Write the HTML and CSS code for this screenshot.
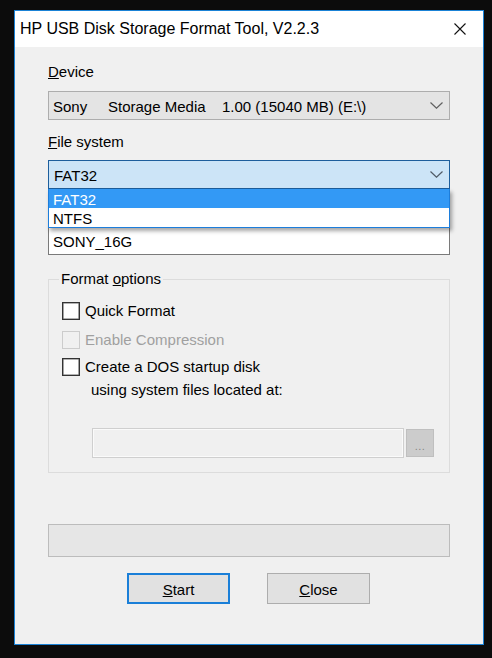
FILE: index.html
```html
<!DOCTYPE html>
<html>
<head>
<meta charset="utf-8">
<link rel="stylesheet" href="styles.css">
</head>
<body>
<div class="window">
  <div class="titlebar">
    <span class="title">HP USB Disk Storage Format Tool, V2.2.3</span>
    <svg class="close-x" width="12" height="12" viewBox="0 0 12 12"><path d="M0.5 0.5 L11.5 11.5 M11.5 0.5 L0.5 11.5" stroke="#111" stroke-width="1.1" fill="none"/></svg>
  </div>
  <div class="client">
    <div class="label lbl-device"><u>D</u>evice</div>
    <div class="combo combo-device">
      <span class="seg seg1">Sony</span><span class="seg seg2">Storage Media</span><span class="seg seg3">1.00 (15040 MB) (E:\)</span>
      <svg class="chev" width="13" height="7" viewBox="0 0 13 7"><path d="M0.5 0.5 L6.5 6.2 L12.5 0.5" stroke="#606060" stroke-width="1.2" fill="none"/></svg>
    </div>
    <div class="label lbl-fs"><u>F</u>ile system</div>
    <div class="fs-wrap">
      <div class="combo combo-fs">
        <span class="seg">FAT32</span>
        <svg class="chev" width="13" height="7" viewBox="0 0 13 7"><path d="M0.5 0.5 L6.5 6.2 L12.5 0.5" stroke="#505a66" stroke-width="1.2" fill="none"/></svg>
      </div>
      <div class="dropdown">
        <div class="item item-sel">FAT32</div>
        <div class="item">NTFS</div>
      </div>
    </div>
    <div class="label-spacer"></div>
    <div class="textbox">SONY_16G</div>
    <fieldset class="group">
      <legend>Format <u>o</u>ptions</legend>
      <div class="check-row row1"><span class="box"></span><span>Quick Format</span></div>
      <div class="check-row row2 disabled"><span class="box"></span><span>Enable Compression</span></div>
      <div class="check-row row3"><span class="box"></span><span>Create a DOS startup disk</span></div>
      <div class="using">using system files located at:</div>
      <div class="path-row">
        <div class="path-input"></div>
        <div class="browse">...</div>
      </div>
    </fieldset>
    <div class="progress"></div>
    <div class="buttons">
      <div class="btn btn-default"><u>S</u>tart</div>
      <div class="btn"><u>C</u>lose</div>
    </div>
  </div>
</div>
</body>
</html>
```
FILE: styles.css
```css
html, body {
  margin: 0;
  background: #0c0c0c;
}
body {
  padding: 10px 0 0 14px;
  font-family: "Liberation Sans", Arial, sans-serif;
  font-size: 15px;
  color: #000;
}
.window {
  box-sizing: border-box;
  width: 470px;
  height: 635px;
  border: 1px solid #1a82d6;
  background: #f0f0f0;
  display: flex;
  flex-direction: column;
}
.titlebar {
  height: 36px;
  background: #fff;
  display: flex;
  align-items: center;
  padding: 0 17px 0 5px;
  flex: none;
}
.title {
  font-size: 16px;
  line-height: 36px;
  flex: 1;
  color: #000;
}
.close-x {
  display: block;
}
.client {
  padding: 0 33px;
  display: flex;
  flex-direction: column;
}
.label {
  line-height: 18px;
  height: 18px;
}
.lbl-device { margin-top: 16px; }
.lbl-fs { margin-top: 13px; }
.label-spacer {
  margin-top: 8px;
  height: 18px;
}
.combo {
  box-sizing: border-box;
  height: 29px;
  border: 1px solid #adadad;
  background: #e4e4e4;
  display: flex;
  align-items: center;
  padding: 2px 6px 0 4px;
  line-height: 25px;
}
.combo-device { margin-top: 10px; }
.seg1 { width: 55px; }
.seg2 { width: 114px; }
.seg3 { flex: 1; }
.combo .chev { margin-left: auto; margin-top: -2px; display: block; }
.fs-wrap {
  position: relative;
  margin-top: 9px;
}
.combo-fs {
  background: #cce4f7;
  border-color: #1d5e9c;
}
.combo-fs .seg { flex: 1; padding-left: 1px; }
.dropdown {
  position: absolute;
  left: 0;
  right: 0;
  top: 100%;
  box-sizing: border-box;
  border: 1px solid #1c7ddb;
  border-top: none;
  background: #fff;
  box-shadow: 2px 3px 4px rgba(0, 0, 0, 0.35);
  z-index: 2;
}
.item {
  box-sizing: border-box;
  height: 19px;
  padding: 3px 0 0 4px;
  line-height: 16px;
}
.item-sel {
  background: #3399f5;
  color: #fff;
}
.textbox {
  box-sizing: border-box;
  margin-top: 11px;
  height: 29px;
  border: 1px solid #7a7a7a;
  background: #fff;
  padding: 2px 4px 0 4px;
  line-height: 25px;
}
.group {
  margin: 15px 0 0 0;
  padding: 0 0 14px 10px;
  border: 1px solid #dcdcdc;
  min-inline-size: 0;
}
.group legend {
  padding: 0 2px;
  line-height: 18px;
  height: 18px;
}
.check-row {
  display: flex;
  align-items: center;
  height: 18px;
  line-height: 18px;
  margin-left: 3px;
}
.check-row .box {
  box-sizing: border-box;
  width: 18px;
  height: 18px;
  border: 1px solid #333;
  box-shadow: inset 0 0 0 0.6px #666;
  background: #fff;
  margin-right: 5px;
  flex: none;
}
.row1 { margin-top: 14px; }
.row2 { margin-top: 11px; }
.row3 { margin-top: 9px; }
.disabled { color: #a0a0a0; }
.disabled .box {
  border-color: #cccccc;
  box-shadow: none;
  background: #f0f0f0;
}
.using {
  margin: 5px 0 0 32px;
  line-height: 18px;
  height: 18px;
}
.path-row {
  display: flex;
  align-items: center;
  margin: 29px 0 0 33px;
  gap: 2px;
}
.path-input {
  box-sizing: border-box;
  width: 312px;
  height: 30px;
  border: 1px solid #cfcfcf;
  box-shadow: inset 0 0 0 1px #fafafa;
  background: #f0f0f0;
}
.browse {
  box-sizing: border-box;
  width: 28px;
  height: 28px;
  border: 1px solid #bfbfbf;
  background: #cccccc;
  color: #858585;
  font-size: 11px;
  line-height: 26px;
  text-align: center;
  letter-spacing: 0.5px;
  padding-top: 3px;
}
.progress {
  box-sizing: border-box;
  margin-top: 51px;
  height: 33px;
  border: 1px solid #bcbcbc;
  background: #e6e6e6;
}
.buttons {
  margin-top: 16px;
  display: flex;
  padding-left: 79px;
  gap: 37px;
}
.btn {
  box-sizing: border-box;
  width: 103px;
  height: 31px;
  border: 1px solid #adadad;
  background: #e1e1e1;
  display: flex;
  align-items: center;
  justify-content: center;
  padding-top: 1px;
}
.btn-default {
  border: 2px solid #1a7fd8;
}
```
